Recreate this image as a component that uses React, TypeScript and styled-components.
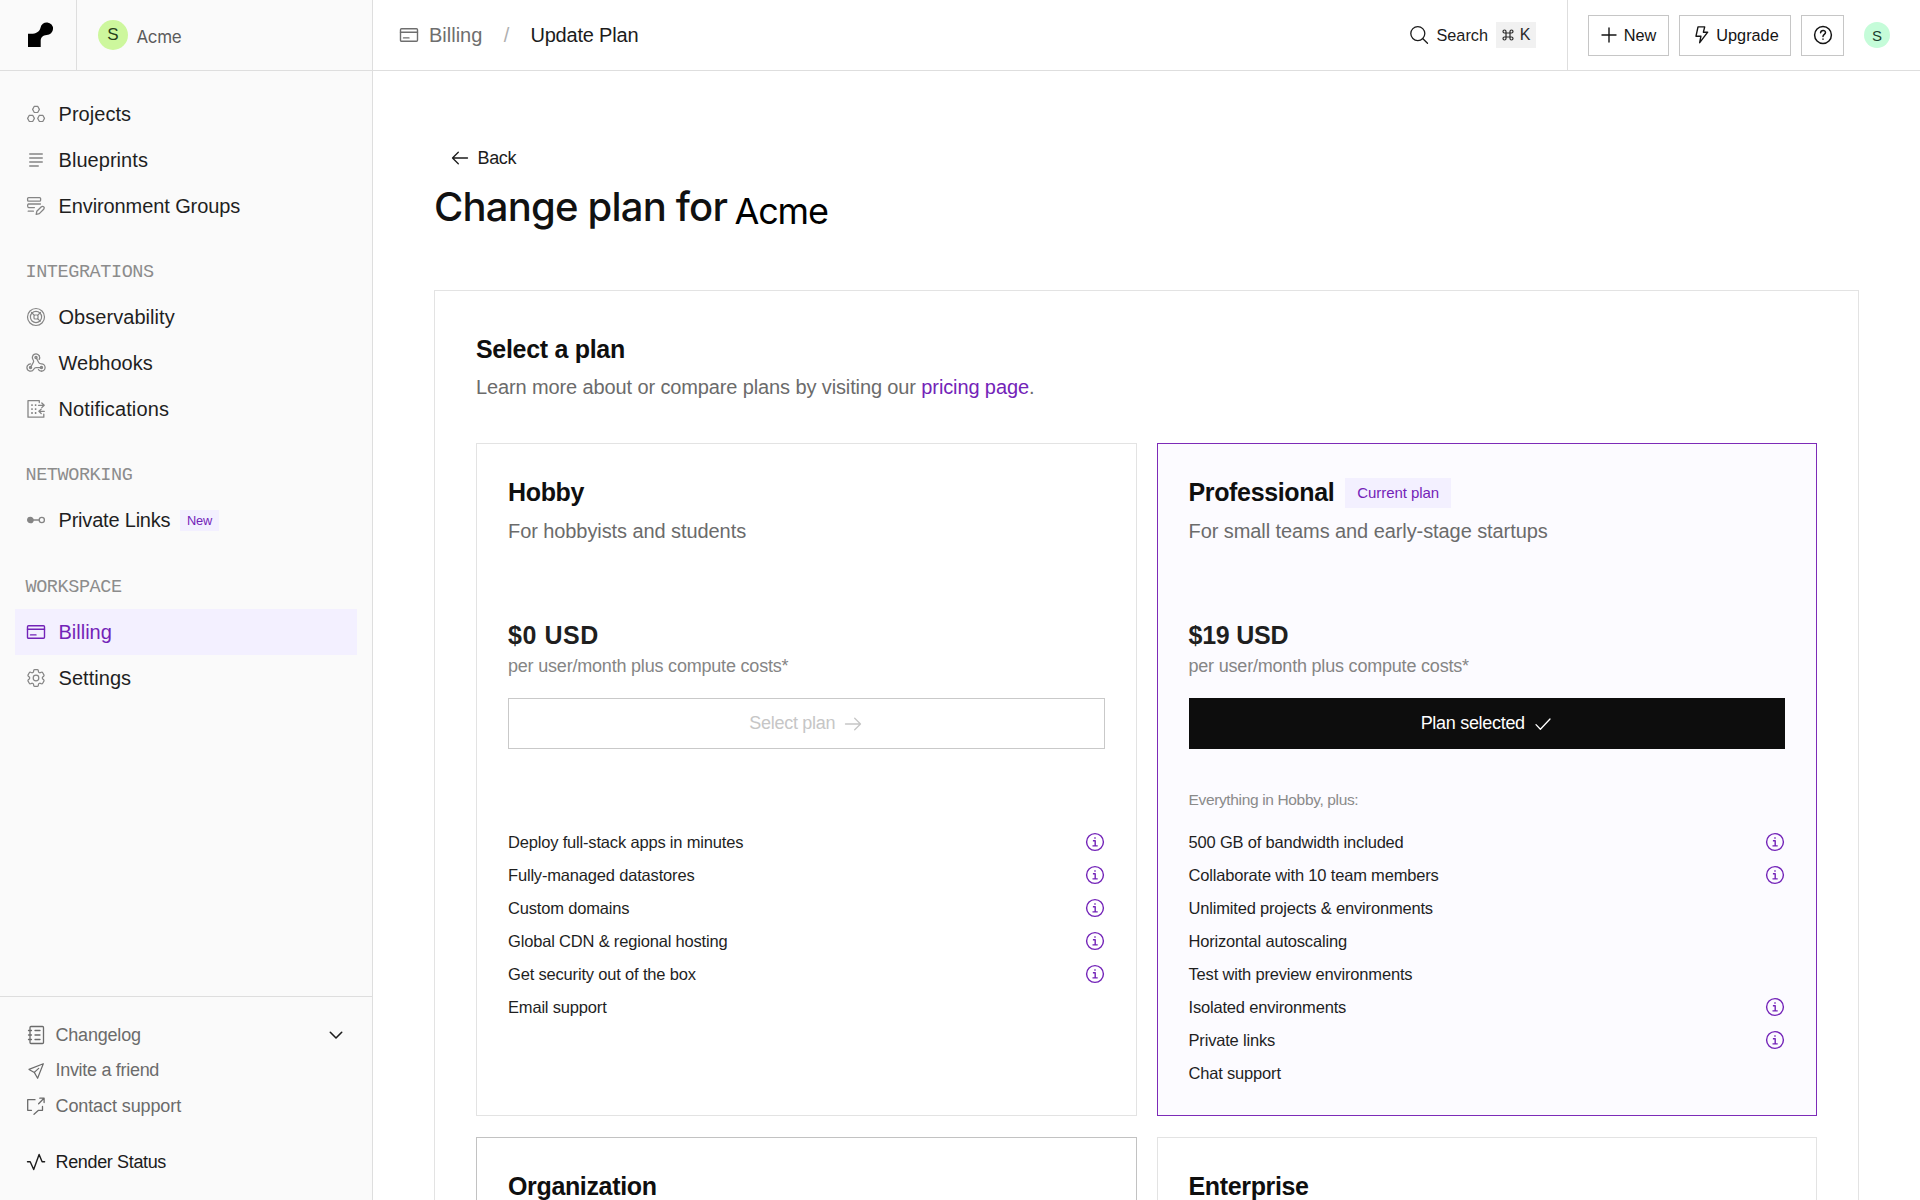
import React from "react";
import styled, { createGlobalStyle } from "styled-components";
import { HiOutlineCog6Tooth } from "react-icons/hi2";

const sans = `"Liberation Sans", Arial, sans-serif`;
const inter = `Inter, "Liberation Sans", sans-serif`;
const mono = `"Liberation Mono", monospace`;
const purple = "#7323b8";

const GlobalStyle = createGlobalStyle`
  * { box-sizing: border-box; }
  body { margin: 0; background: #fff; font-family: ${sans}; color: #1c1c1c; }
  h1, h2, h3, p, ul { margin: 0; padding: 0; font-weight: normal; list-style: none; }
  button { font-family: inherit; margin: 0; }
  svg { display: block; flex: none; }
  a { text-decoration: none; color: inherit; }
`;

/* ---------- layout shell ---------- */

const Shell = styled.div`
  display: flex;
  width: 1920px;
  height: 1200px;
  overflow: hidden;
`;

const Sidebar = styled.aside`
  display: flex;
  flex-direction: column;
  flex: none;
  width: 373px;
  background: #fafafa;
  border-right: 1px solid #dedede;
`;

const SidebarTop = styled.div`
  display: flex;
  flex: none;
  height: 71px;
  border-bottom: 1px solid #dedede;
`;

const LogoCell = styled.div`
  width: 77px;
  border-right: 1px solid #dedede;
  padding: 21px 0 0 27px;
`;

const Workspace = styled.div`
  display: flex;
  padding: 20px 0 0 21px;
`;

const Avatar = styled.span<{ $size: number; $bg: string; $fg: string; $font: number }>`
  display: flex;
  flex: none;
  align-items: center;
  justify-content: center;
  width: ${(p) => p.$size}px;
  height: ${(p) => p.$size}px;
  border-radius: 50%;
  background: ${(p) => p.$bg};
  color: ${(p) => p.$fg};
  font-size: ${(p) => p.$font}px;
`;

const WorkspaceName = styled.span`
  margin: 6px 0 0 8.5px;
  font: 400 17px/22px ${inter};
  letter-spacing: -0.4px;
  color: #5c5c5c;
`;

const Nav = styled.nav`
  flex: 1;
  padding: 20.5px 15.5px 0 15px;
`;

const NavHeading = styled.h2`
  display: flex;
  align-items: center;
  height: 45.7px;
  margin-top: 20.3px;
  padding: 2px 0 0 10.5px;
  font-family: ${mono};
  font-size: 18.5px;
  letter-spacing: -0.42px;
  color: #8c8c8c;
`;

const NavItem = styled.a<{ $active?: boolean; $track?: number }>`
  display: flex;
  align-items: center;
  height: 45.7px;
  padding-left: 10.5px;
  gap: 13px;
  font-size: 20px;
  letter-spacing: ${(p) => p.$track ?? 0}px;
  color: ${(p) => (p.$active ? purple : "#1f1f1f")};
  background: ${(p) => (p.$active ? "#f3f0ff" : "transparent")};
  > svg { color: ${(p) => (p.$active ? purple : "#858585")}; }
`;

const NavLabel = styled.span`
  padding-top: 1px;
`;

const NewTag = styled.span`
  margin-left: -3px;
  padding: 0 6.5px;
  font: 400 12.8px/21px ${sans};
  letter-spacing: -0.1px;
  background: #f3f0ff;
  color: ${purple};
`;

const SidebarFooter = styled.div`
  flex: none;
  height: 204px;
  padding: 20.5px 15px 0 25.5px;
  border-top: 1px solid #dedede;
`;

const FooterItem = styled.a<{ $strong?: boolean; $track: number }>`
  display: flex;
  align-items: center;
  gap: 10px;
  height: 35.6px;
  margin-top: ${(p) => (p.$strong ? 20 : 0)}px;
  font-size: 18px;
  letter-spacing: ${(p) => p.$track}px;
  color: ${(p) => (p.$strong ? "#1c1c1c" : "#6b6b6b")};
`;

const Chevron = styled.span`
  margin-left: auto;
  margin-right: 11px;
  color: #1c1c1c;
`;

/* ---------- header ---------- */

const Main = styled.div`
  display: flex;
  flex-direction: column;
  flex: 1;
  min-width: 0;
`;

const Header = styled.header`
  display: flex;
  flex: none;
  align-items: center;
  height: 71px;
  padding-left: 26px;
  border-bottom: 1px solid #dedede;
`;

const Crumb = styled.span<{ $color: string; $gap: number; $track?: number }>`
  margin-left: ${(p) => p.$gap}px;
  font-size: 20px;
  letter-spacing: ${(p) => p.$track ?? 0}px;
  color: ${(p) => p.$color};
`;

const CrumbIcon = styled.span`
  color: #6e6e6e;
`;

const SearchBox = styled.div`
  display: flex;
  align-items: center;
  height: 70px;
  margin-left: auto;
  padding-right: 31px;
  border-right: 1px solid #dedede;
  font-size: 16.3px;
`;

const SearchText = styled.span`
  margin-left: 7.5px;
`;

const Keys = styled.kbd`
  display: flex;
  align-items: center;
  justify-content: space-between;
  width: 40px;
  height: 26px;
  margin-left: 8px;
  padding: 0 5.5px 0 6px;
  background: #f1f1f1;
  font: 400 16px/26px ${sans};
  color: #2b2b2b;
`;

const Actions = styled.div`
  display: flex;
  align-items: center;
  padding: 0 30px 0 20px;
  gap: 10px;
`;

const OutlineButton = styled.button<{ $width: number; $gap?: number }>`
  display: flex;
  align-items: center;
  justify-content: center;
  gap: ${(p) => p.$gap ?? 7}px;
  width: ${(p) => p.$width}px;
  height: 41px;
  padding: 0;
  border: 1px solid #c6c6c6;
  background: #fff;
  font-size: 16.3px;
  color: #141414;
`;

const UserSlot = styled.div`
  margin-left: 10px;
`;

/* ---------- content ---------- */

const Content = styled.main`
  flex: 1;
  min-height: 0;
  overflow: hidden;
  padding: 73px 61px 0 61px;
`;

const BackLink = styled.a`
  display: flex;
  align-items: center;
  gap: 8.5px;
  height: 28px;
  padding-left: 17px;
  font-size: 18px;
  letter-spacing: -0.35px;
`;

const Title = styled.h1`
  display: flex;
  align-items: baseline;
  height: 50px;
  margin-top: 10px;
  font: 500 40px/50px ${inter};
  letter-spacing: -0.8px;
  color: #111;
`;

const TitleName = styled.span`
  position: relative;
  top: 2.5px;
  margin-left: 7.5px;
  font-size: 36px;
  font-weight: 400;
  letter-spacing: -1.2px;
  color: #000;
`;

const Panel = styled.section`
  height: 1400px;
  margin-top: 58px;
  padding: 40px 41px 0;
  border: 1px solid #e3e3e3;
`;

const PanelTitle = styled.h2`
  font: 700 25px/36px ${sans};
  letter-spacing: -0.3px;
  color: #0f0f0f;
`;

const PanelText = styled.p`
  margin-top: 2px;
  font-size: 20px;
  line-height: 36px;
  letter-spacing: -0.12px;
  color: #6b6b6b;
  a { color: ${purple}; }
`;

const PlanGrid = styled.div`
  display: grid;
  grid-template-columns: 660.5px 660.5px;
  grid-template-rows: 673px 673px;
  gap: 21px 20px;
  margin-top: 38px;
`;

const borderColors = { plain: "#e3e3e3", strong: "#c2c2c2", current: "#7d2bb8" };

const PlanCard = styled.article<{ $tone: keyof typeof borderColors }>`
  padding: 31px 31px 0;
  border: 1px solid ${(p) => borderColors[p.$tone]};
  background: ${(p) => (p.$tone === "current" ? "#fcfbff" : "#fff")};
`;

const PlanHead = styled.div`
  display: flex;
  align-items: center;
  gap: 11px;
  height: 35px;
`;

const PlanName = styled.h3`
  font: 700 25px/35px ${sans};
  letter-spacing: -0.35px;
  color: #0f0f0f;
`;

const CurrentTag = styled.span`
  padding: 0 12px;
  background: #f3f0ff;
  font-size: 15px;
  line-height: 30px;
  letter-spacing: -0.08px;
  color: ${purple};
`;

const PlanText = styled.p`
  margin-top: 3px;
  font-size: 20px;
  line-height: 36px;
  letter-spacing: -0.08px;
  color: #6b6b6b;
`;

const Price = styled.p<{ $track: number }>`
  margin-top: 68px;
  font: 700 25px/36px ${sans};
  letter-spacing: ${(p) => p.$track}px;
  color: #1f1f1f;
`;

const PriceNote = styled.p`
  font-size: 18px;
  line-height: 27px;
  letter-spacing: -0.2px;
  color: #858585;
`;

const PlanButton = styled.button<{ $filled?: boolean }>`
  display: flex;
  align-items: center;
  justify-content: center;
  gap: 9px;
  width: 100%;
  height: 51px;
  margin-top: 18px;
  padding: 0 1px 0 0;
  border: 1px solid ${(p) => (p.$filled ? "#0d0d0d" : "#c9c9c9")};
  background: ${(p) => (p.$filled ? "#0d0d0d" : "#fff")};
  font-size: 18px;
  letter-spacing: -0.3px;
  color: ${(p) => (p.$filled ? "#fff" : "#c6c6c6")};
`;

const Inherits = styled.p`
  height: 26px;
  margin-top: 38px;
  font-size: 15.5px;
  line-height: 26px;
  letter-spacing: -0.35px;
  color: #8a8a8a;
`;

const Features = styled.ul`
  margin-top: 12.5px;
`;

const Feature = styled.li`
  display: flex;
  align-items: center;
  justify-content: space-between;
  height: 33px;
  font-size: 16.5px;
  letter-spacing: -0.18px;
  color: #1f1f1f;
  svg { color: ${purple}; }
`;

/* ---------- icons ---------- */

type IconProps = { children: React.ReactNode; size?: number; stroke?: number; box?: number };

const Icon = ({ children, size = 20, stroke = 1.2, box = 20 }: IconProps) => (
  <svg width={size} height={size} viewBox={`0 0 ${box} ${box}`} fill="none" stroke="currentColor"
    strokeWidth={stroke} strokeLinecap="round" strokeLinejoin="round">
    {children}
  </svg>
);

const Logo = () => (
  <svg width="28" height="28" viewBox="0 0 28 28" fill="#000">
    <path d="M1 12.800h3.200c4.600 0 8.300-2 9.300-6A6.300 6.300 0 1 1 19.700 14c-3.700.1-6 2.600-6 5.800V26H1Z" />
  </svg>
);

const ProjectsIcon = () => (
  <Icon>
    <path d="M8.300 2.300h3.400l1.700 3.100-1.700 3.100H8.300L6.600 5.400ZM3.300 11.300h3.400l1.700 3.100-1.700 3.100H3.300l-1.700-3.100ZM13.400 11.300h3.400l1.700 3.100-1.700 3.100h-3.400l-1.700-3.100Z" />
  </Icon>
);
const BlueprintsIcon = () => (
  <Icon stroke={1.3}><path d="M3.700 4h12.600M3.700 8h12.600M3.700 12h12.600M3.700 16h8.600" /></Icon>
);
const EnvIcon = () => (
  <Icon stroke={1.3}>
    <rect x="1.600" y="1.600" width="13" height="3.600" rx="1" />
    <path d="M14.400 8H2.600c-1.300 0-1.300 3.600 0 3.600h5.800M7.400 15.200H2.200M10.200 18.300l.6-3 4.300-4.300c1.800-1.600 4.200.4 2.600 2.300l-4.400 4.300Z" />
  </Icon>
);
const ObservabilityIcon = () => (
  <Icon stroke={1.2}>
    <circle cx="10" cy="10" r="8.500" />
    <circle cx="10" cy="10" r="5.600" />
    <rect x="8" y="8" width="4" height="4" rx="1" />
    <path d="m5.500 5.500 2.700 2.700M14.500 5.500l-2.700 2.700M11.800 11.800l2.400 2.400" />
  </Icon>
);
const WebhooksIcon = () => (
  <Icon box={22} stroke={1.4}>
    <g transform="translate(-1 -1)">
      <path d="M18 16.980h-5.990c-1.100 0-1.950.94-2.480 1.900A4 4 0 0 1 2 17c.01-.7.200-1.400.57-2" />
      <path d="m6 17 3.130-5.780c.53-.97.100-2.180-.5-3.100a4 4 0 1 1 6.890-4.060" />
      <path d="m12 6 3.130 5.730C15.660 12.700 16.900 13 18 13a4 4 0 0 1 0 8" />
      <path d="M2.600 15A4 4 0 0 1 6 13M15.500 4a4 4 0 0 1 0 4M18 21a4 4 0 0 1-3.300-1.700" />
      <circle cx="6" cy="17" r="1.200" />
      <circle cx="12" cy="6" r="1.200" />
      <circle cx="18" cy="17" r="1.200" />
    </g>
  </Icon>
);
const NotificationsIcon = () => (
  <Icon stroke={1.3}>
    <path d="M13.300 3.500V1.700H2v16.500h15.800v-3M12.500 6.300H18M15.800 4l2.400 2.300-2.400 2.300M18.300 12.300h-5M15.200 10.100l-2.300 2.200 2.300 2.200" />
    <path strokeWidth="1.500" strokeDasharray="1.800 2.100" strokeLinecap="butt" d="M6 5.300v10M9.600 5.300v10" />
  </Icon>
);
const LinkIcon = () => (
  <Icon stroke={1.3}>
    <circle cx="4.400" cy="10" r="2.700" fill="currentColor" />
    <circle cx="15.800" cy="10" r="2.600" />
    <path d="M7 10h6" />
  </Icon>
);
const CardIcon = () => (
  <Icon stroke={1.4}>
    <rect x="1.500" y="3.800" width="17" height="12.400" rx="1" />
    <path d="M1.500 7.300h17M4.500 12.900h5.500" />
  </Icon>
);
const ChangelogIcon = () => (
  <Icon stroke={1.3}>
    <rect x="4" y="1.500" width="13.500" height="17" rx="1" />
    <path d="M2.500 5.500h3M2.500 10h3M2.500 14.500h3M9 5.500h5M9 10h5M9 14.500h5" />
  </Icon>
);
const PlaneIcon = () => (
  <Icon stroke={1.2}><path d="M17.300 2.700 3 8.400l5.300 3 3.300 5.900ZM8.300 11.400l4.400-4" /></Icon>
);
const SupportIcon = () => (
  <Icon stroke={1.3}>
    <path d="M9 3.700H1.700v10.600h3.800M16.500 10.500v3.800h-4L8 18.200M12.600 7.700l5.400-5.400M13.800 2.200h4.300v4.300" />
  </Icon>
);
const StatusIcon = () => (
  <Icon stroke={1.4}><path d="M1.500 9.800h2.700l3.500 7.700 5.400-15 3 7.300h2.500" /></Icon>
);
const InfoIcon = () => (
  <Icon stroke={1.4}>
    <circle cx="10" cy="10" r="8.400" />
    <path strokeLinecap="butt" d="M7.900 8.700h2.300v5M7.500 13.900h5.200M10 5.200v1.600" />
  </Icon>
);

/* ---------- data ---------- */

type FeatureRow = [label: string, info?: boolean];

const hobby: FeatureRow[] = [
  ["Deploy full-stack apps in minutes", true],
  ["Fully-managed datastores", true],
  ["Custom domains", true],
  ["Global CDN & regional hosting", true],
  ["Get security out of the box", true],
  ["Email support"],
];

const professional: FeatureRow[] = [
  ["500 GB of bandwidth included", true],
  ["Collaborate with 10 team members", true],
  ["Unlimited projects & environments"],
  ["Horizontal autoscaling"],
  ["Test with preview environments"],
  ["Isolated environments", true],
  ["Private links", true],
  ["Chat support"],
];

const FeatureList = ({ rows }: { rows: FeatureRow[] }) => (
  <Features>
    {rows.map(([label, info]) => (
      <Feature key={label}>{label}{info && <InfoIcon />}</Feature>
    ))}
  </Features>
);

export default function App() {
  return (
    <>
      <GlobalStyle />
      <Shell>
        <Sidebar>
          <SidebarTop>
            <LogoCell><Logo /></LogoCell>
            <Workspace>
              <Avatar $size={30} $bg="#cdf79d" $fg="#26401a" $font={17}>S</Avatar>
              <WorkspaceName>Acme</WorkspaceName>
            </Workspace>
          </SidebarTop>
          <Nav>
            <NavItem $track={0.05}><ProjectsIcon /><NavLabel>Projects</NavLabel></NavItem>
            <NavItem $track={0.05}><BlueprintsIcon /><NavLabel>Blueprints</NavLabel></NavItem>
            <NavItem $track={-0.1}><EnvIcon /><NavLabel>Environment Groups</NavLabel></NavItem>
            <NavHeading>INTEGRATIONS</NavHeading>
            <NavItem $track={0.05}><ObservabilityIcon /><NavLabel>Observability</NavLabel></NavItem>
            <NavItem><WebhooksIcon /><NavLabel>Webhooks</NavLabel></NavItem>
            <NavItem $track={0.12}><NotificationsIcon /><NavLabel>Notifications</NavLabel></NavItem>
            <NavHeading>NETWORKING</NavHeading>
            <NavItem $track={-0.2}><LinkIcon /><NavLabel>Private Links</NavLabel><NewTag>New</NewTag></NavItem>
            <NavHeading>WORKSPACE</NavHeading>
            <NavItem $active><CardIcon /><NavLabel>Billing</NavLabel></NavItem>
            <NavItem $track={0.05}>
              <Icon size={20} box={20}>
                <HiOutlineCog6Tooth x={-1.250} y={-1.250} size={22.500} strokeWidth={1.300} />
              </Icon>
              <NavLabel>Settings</NavLabel>
            </NavItem>
          </Nav>
          <SidebarFooter>
            <FooterItem $track={-0.2}>
              <ChangelogIcon />Changelog
              <Chevron><Icon size={20} stroke={1.6}><path d="m4.300 7.300 5.700 5.700 5.700-5.700" /></Icon></Chevron>
            </FooterItem>
            <FooterItem $track={-0.3}><PlaneIcon />Invite a friend</FooterItem>
            <FooterItem $track={-0.1}><SupportIcon />Contact support</FooterItem>
            <FooterItem $strong $track={-0.35}><StatusIcon />Render Status</FooterItem>
          </SidebarFooter>
        </Sidebar>

        <Main>
          <Header>
            <CrumbIcon><CardIcon /></CrumbIcon>
            <Crumb $color="#6e6e6e" $gap={10}>Billing</Crumb>
            <Crumb $color="#b0b0b0" $gap={21.5}>/</Crumb>
            <Crumb $color="#1c1c1c" $gap={21} $track={-0.2}>Update Plan</Crumb>
            <SearchBox>
              <Icon stroke={1.3}><circle cx="8.800" cy="8.600" r="7" /><path d="m13.900 13.700 4.600 4.600" /></Icon>
              <SearchText>Search</SearchText>
              <Keys>
                <Icon size={12} box={12} stroke={1.2}>
                  <path d="M4 4h4v4H4ZM4 4H2.500A1.500 1.500 0 1 1 4 2.500ZM8 4V2.500A1.500 1.500 0 1 1 9.500 4ZM8 8h1.500A1.500 1.500 0 1 1 8 9.500ZM4 8v1.500A1.500 1.500 0 1 1 2.500 8Z" />
                </Icon>
                <span>K</span>
              </Keys>
            </SearchBox>
            <Actions>
              <OutlineButton $width={81}>
                <Icon size={16} box={16} stroke={1.4}><path d="M1 8h14M8 1v14" /></Icon>New
              </OutlineButton>
              <OutlineButton $width={112} $gap={5}>
                <Icon stroke={1.4}>
                  <path d="M7 1.900h6.700L12.400 7.200h4.300L8.700 17.700 9.900 11.200H5Z" />
                </Icon>Upgrade
              </OutlineButton>
              <OutlineButton $width={43}>
                <Icon stroke={1.5}>
                  <circle cx="10" cy="10" r="8.400" />
                  <path d="M7.600 7.800c.2-3.200 5-3 4.900-.2 0 1.700-2.500 1.800-2.500 3.800M10 14v.2" />
                </Icon>
              </OutlineButton>
              <UserSlot><Avatar $size={26} $bg="#c5fcd9" $fg="#1c4030" $font={15}>S</Avatar></UserSlot>
            </Actions>
          </Header>

          <Content>
            <BackLink>
              <Icon size={18} box={18} stroke={1.3}><path d="M16.500 9h-15M7.300 3.200 1.500 9l5.800 5.800" /></Icon>
              Back
            </BackLink>
            <Title>Change plan for<TitleName>Acme</TitleName></Title>

            <Panel>
              <PanelTitle>Select a plan</PanelTitle>
              <PanelText>
                Learn more about or compare plans by visiting our <a>pricing page</a>.
              </PanelText>
              <PlanGrid>
                <PlanCard $tone="plain">
                  <PlanHead><PlanName>Hobby</PlanName></PlanHead>
                  <PlanText>For hobbyists and students</PlanText>
                  <Price $track={0.55}>$0 USD</Price>
                  <PriceNote>per user/month plus compute costs*</PriceNote>
                  <PlanButton>
                    Select plan
                    <Icon size={18} box={18} stroke={1.3}><path d="M1.500 9h15M10.700 3.200 16.500 9l-5.800 5.800" /></Icon>
                  </PlanButton>
                  <Inherits />
                  <FeatureList rows={hobby} />
                </PlanCard>
                <PlanCard $tone="current">
                  <PlanHead>
                    <PlanName>Professional</PlanName>
                    <CurrentTag>Current plan</CurrentTag>
                  </PlanHead>
                  <PlanText>For small teams and early-stage startups</PlanText>
                  <Price $track={-0.25}>$19 USD</Price>
                  <PriceNote>per user/month plus compute costs*</PriceNote>
                  <PlanButton $filled>
                    Plan selected
                    <Icon size={18} box={18} stroke={1.3}><path d="m2 9.600 4.400 4.600L16 4" /></Icon>
                  </PlanButton>
                  <Inherits>Everything in Hobby, plus:</Inherits>
                  <FeatureList rows={professional} />
                </PlanCard>
                <PlanCard $tone="strong">
                  <PlanHead><PlanName>Organization</PlanName></PlanHead>
                </PlanCard>
                <PlanCard $tone="plain">
                  <PlanHead><PlanName>Enterprise</PlanName></PlanHead>
                </PlanCard>
              </PlanGrid>
            </Panel>
          </Content>
        </Main>
      </Shell>
    </>
  );
}
